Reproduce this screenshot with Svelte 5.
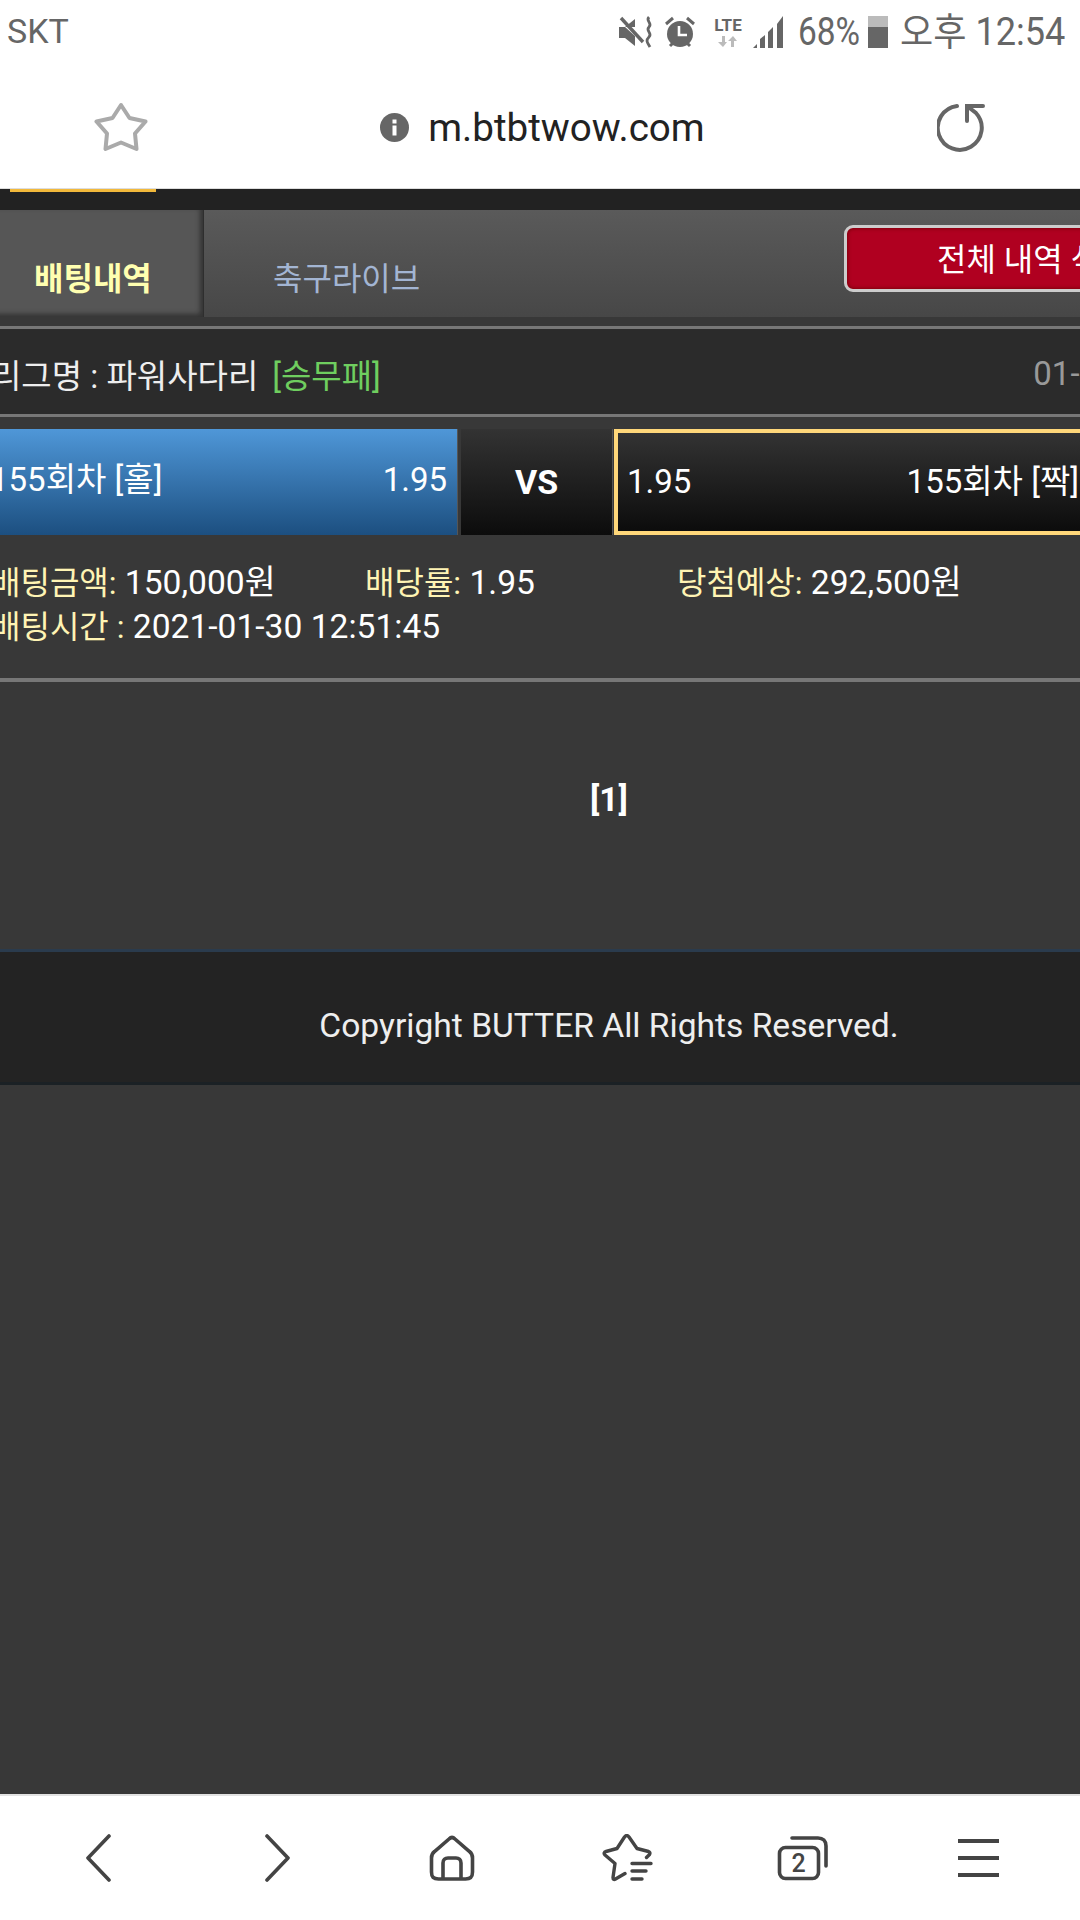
<script>
  const details = [
    { label: '배팅금액:', value: '150,000원' },
    { label: '배당률:', value: '1.95' },
    { label: '당첨예상:', value: '292,500원' }
  ];
</script>

<div class="screen">
  <!-- STATUS BAR -->
  <div class="status">
    <span class="carrier">SKT</span>
    <div class="status-right">
      <svg class="ic-mute" width="36" height="32" viewBox="0 0 36 32">
        <path d="M0 11h6l10-8v8l-3 0zM0 11v11h6l10 8V20L6 11z" fill="#666"/>
        <path d="M2 2l22 24" stroke="#666" stroke-width="3.4" fill="none"/>
        <path d="M30 1c-4 4 4 6 0 10s4 6 0 10-1 6 1 10" stroke="#666" stroke-width="2.8" fill="none"/>
      </svg>
      <svg class="ic-alarm" width="32" height="33" viewBox="0 0 32 33">
        <circle cx="16" cy="18" r="13" fill="#666"/>
        <path d="M2 8l7-6M30 8l-7-6M6 30l3-3M26 30l-3-3" stroke="#666" stroke-width="3" fill="none"/>
        <path d="M15 10v9h8" stroke="#fff" stroke-width="2.6" fill="none"/>
      </svg>
      <div class="lte">
        <span>LTE</span>
        <svg width="20" height="11" viewBox="0 0 20 11">
          <path d="M4 0v6H0l5 5 4-5H7V0zM15 0l-5 5h3v6h3V5h3z" fill="#bbb"/>
        </svg>
      </div>
      <svg class="ic-signal" width="32" height="32" viewBox="0 0 32 32">
        <path d="M0 32l4-4v4zM7 32v-9l5-4v13zM15 32V16l5-5v21zM24 32V8l6-8v32z" fill="#666"/>
      </svg>
      <span class="pct">68%</span>
      <div class="battery"><i></i></div>
      <span class="clock">오후 12:54</span>
    </div>
  </div>

  <!-- URL BAR -->
  <div class="urlbar">
    <svg width="56" height="52" viewBox="0 0 56 52">
      <path d="M27 4l8.500 13 16 3.500-10.500 12 1.500 15.500-15.500-6.500-15.500 6.500 1.500-15.500-10.500-12 16-3.500z" fill="none" stroke="#aaa" stroke-width="4" stroke-linejoin="round"/>
    </svg>
    <div class="url">
      <svg width="29" height="29" viewBox="0 0 29 29">
        <circle cx="14.500" cy="14.500" r="14.500" fill="#666"/>
        <rect x="12.500" y="12.500" width="4" height="10" fill="#fff"/>
        <rect x="12.500" y="6.500" width="4" height="4" fill="#fff"/>
      </svg>
      <span>m.btbtwow.com</span>
    </div>
    <svg width="50" height="52" viewBox="0 0 50 52">
      <path d="M20 5A22 22 0 1 0 39 12L30 5" fill="none" stroke="#666" stroke-width="4" stroke-linecap="round"/>
      <path d="M46 5H30V20" fill="none" stroke="#666" stroke-width="4" stroke-linecap="round"/>
    </svg>
  </div>

  <!-- PAGE -->
  <div class="page">
    <div class="topstrip"><div class="marker"></div></div>

    <div class="tabs">
      <div class="tab active">배팅내역</div>
      <div class="tab">축구라이브</div>
      <button class="del-btn">전체 내역 삭제</button>
    </div>

    <div class="league">
      <span>리그명 : 파워사다리</span>
      <span class="green">[승무패]</span>
      <span class="date">01-30 12:50</span>
    </div>

    <div class="match">
      <div class="side home">
        <span>155회차 [홀]</span>
        <span>1.95</span>
      </div>
      <div class="vs">VS</div>
      <div class="side away">
        <span>1.95</span>
        <span>155회차 [짝]</span>
      </div>
    </div>

    <div class="details">
      <div class="detail-row">
        {#each details as d}
          <div><span class="label">{d.label}</span> {d.value}</div>
        {/each}
      </div>
      <div><span class="label">배팅시간 :</span> 2021-01-30 12:51:45</div>
    </div>

    <div class="pager">[1]</div>

    <div class="footer">Copyright BUTTER All Rights Reserved.</div>
  </div>

  <!-- BOTTOM NAV -->
  <div class="bottom">
    <svg width="26" height="48" viewBox="0 0 26 48">
      <path d="M24 2L3 24l21 22" fill="none" stroke="#444" stroke-width="3.600" stroke-linecap="round" stroke-linejoin="round"/>
    </svg>
    <svg class="fwd" width="26" height="48" viewBox="0 0 26 48">
      <path d="M2 2l21 22L2 46" fill="none" stroke="#444" stroke-width="3.600" stroke-linecap="round" stroke-linejoin="round"/>
    </svg>
    <svg class="home-ic" width="46" height="48" viewBox="0 0 46 48">
      <path d="M2.500 24c0-3 1-5 3-6.500L20 5c2-2 4-2 6 0l14.500 12.500c2 1.500 3 3.500 3 6.500v14c0 5-2 7-7 7H9.500c-5 0-7-2-7-7z" fill="none" stroke="#444" stroke-width="3.600"/>
      <path d="M14 45V29c0-3 2-5 5-5h8c3 0 5 2 5 5v16" fill="none" stroke="#444" stroke-width="3.600"/>
    </svg>
    <svg class="fav-ic" width="52" height="48" viewBox="0 0 52 48">
      <path d="M44.500 23.500l3-3c1-1.500 0-2.500-1-3L35 14.500 27 3c-1.500-2-3-2-4.500 0L15 14.500 4 17.500c-2 .5-2.500 2-1 3.500L13 29.500l-2 14c0 2 1 2.500 2.500 1.500L23 39.500" fill="none" stroke="#444" stroke-width="3.400" stroke-linecap="round" stroke-linejoin="round"/>
      <path d="M30 29.500h19M30 37h14M30 45h10" stroke="#444" stroke-width="3.400" stroke-linecap="round" fill="none"/>
    </svg>
    <svg class="tabs-ic" width="52" height="46" viewBox="0 0 52 46">
      <rect x="2.500" y="12.500" width="39" height="31" rx="6" fill="none" stroke="#444" stroke-width="3.600"/>
      <path d="M15 3h26c5 0 8 3 8 8v20" fill="none" stroke="#444" stroke-width="3.600" stroke-linecap="round"/>
      <text x="21.500" y="36.500" text-anchor="middle" class="tabnum">2</text>
    </svg>
    <div class="menu"><i></i><i></i><i></i></div>
  </div>
</div>

<style>
  :global(body) {
    margin: 0;
    background: #383838;
  }

  .screen {
    width: 1080px;
    height: 1920px;
    overflow: hidden;
    display: flex;
    flex-direction: column;
    font-family: Roboto, "Noto Sans CJK KR", sans-serif;
  }

  /* STATUS BAR */
  .status {
    height: 60px;
    flex: none;
    background: #fff;
    color: #666;
    display: flex;
    align-items: center;
    justify-content: space-between;
    padding: 4px 15px 0 7px;
    box-sizing: border-box;
  }

  .carrier {
    font-size: 34px;
    line-height: 40px;
    margin-top: -3px;
  }

  .status-right {
    display: flex;
    align-items: center;
  }

  .ic-mute { margin-right: 9px; }
  .ic-alarm { margin-right: 15px; }

  .lte {
    width: 34px;
    margin-right: 8px;
    display: flex;
    flex-direction: column;
    align-items: center;
    font-size: 17px;
    font-weight: 700;
    line-height: 17px;
    gap: 2px;
  }

  .ic-signal { margin-right: 13px; }

  .pct, .clock {
    font-size: 38px;
    line-height: 40px;
    display: inline-block;
    transform-origin: left center;
    white-space: nowrap;
  }

  .pct {
    width: 70px;
    transform: scaleX(0.88);
  }

  .clock {
    width: 165px;
    margin-left: 12px;
    transform: scaleX(0.95);
  }

  .battery {
    width: 20px;
    height: 32px;
    background: #bbb;
    position: relative;
  }

  .battery i {
    position: absolute;
    left: 0;
    right: 0;
    bottom: 0;
    height: 21px;
    background: #666;
  }

  /* URL BAR */
  .urlbar {
    height: 129px;
    flex: none;
    box-sizing: border-box;
    background: #fff;
    border-bottom: 1px solid #ddd;
    display: flex;
    align-items: center;
    padding: 6px 93px 0 94px;
    justify-content: space-between;
  }

  .url {
    display: flex;
    align-items: center;
    gap: 19px;
    margin-left: -2px;
    color: #222;
    font-size: 38.6px;
  }

  /* PAGE */
  .page {
    flex: 1;
    width: 1258px;
    margin-left: -20px;
    background: #383838;
    color: #fff;
    font-size: 33.6px;
    white-space: nowrap;
  }

  .topstrip {
    height: 21px;
    background: #222;
    padding-left: 30px;
  }

  .marker {
    width: 146px;
    height: 3px;
    background: #f2b93b;
  }

  .tabs {
    height: 107px;
    display: flex;
    position: relative;
    background: linear-gradient(#5a5a5a, #474747);
  }

  .tab {
    box-sizing: border-box;
    padding-top: 47px;
    font-size: 32px;
    line-height: 44px;
    color: #a3b5d3;
    padding-left: 69px;
  }

  .tab.active {
    width: 224px;
    padding-left: 54px;
    color: #ffffb0;
    font-weight: 700;
    background: #565656;
    box-shadow: inset -3px -3px 5px #333;
    border-right: 1px solid #2e2e2e;
  }

  .del-btn {
    position: absolute;
    left: 864px;
    top: 15px;
    width: 300px;
    height: 67px;
    box-sizing: border-box;
    border: 3px solid #ccc;
    border-radius: 9px;
    background: #b00020;
    box-shadow: inset 0 0 4px #600;
    color: #fff;
    font: inherit;
    font-size: 32px;
    padding: 0 0 4px 90px;
    text-align: left;
    white-space: nowrap;
  }

  .league {
    margin-top: 9px;
    height: 91px;
    box-sizing: border-box;
    background: #2b2b2b;
    border-top: 3px solid #777;
    border-bottom: 3px solid #777;
    display: flex;
    align-items: center;
    color: #eee;
    font-size: 33px;
    gap: 14px;
    padding: 4px 31px 0 11px;
  }

  .green { color: #6fce5f; }

  .date {
    color: #999;
    margin-left: auto;
  }

  .match {
    display: flex;
    height: 106px;
    margin-top: 12px;
    gap: 3px;
  }

  .side {
    display: flex;
    align-items: center;
    justify-content: space-between;
    box-sizing: border-box;
    padding-bottom: 4px;
    font-size: 33px;
  }

  .side span {
    line-height: 40px;
  }

  .home {
    width: 478px;
    padding-left: 10px;
    padding-right: 10px;
    background: linear-gradient(#4f97d8, #1c4f80);
    border-right: 1px solid #555;
  }

  .vs {
    width: 151px;
    background: linear-gradient(#333, #0c0c0c);
    display: flex;
    align-items: center;
    justify-content: center;
    font-weight: 700;
    font-size: 34px;
    border-right: 1px solid #555;
  }

  .away {
    width: 600px;
    border: 4px solid #ffd77a;
    padding: 0 131px 0 9px;
    background: linear-gradient(#333, #0c0c0c);
    margin-left: -2px;
  }

  .details {
    height: 147px;
    box-sizing: border-box;
    padding-top: 26px;
    line-height: 44px;
    border-bottom: 4px solid #777;
    padding-left: 11px;
  }

  .detail-row {
    display: grid;
    grid-template-columns: 374px 312px 1fr;
  }

  .label {
    color: #fff4b4;
    font-size: 32px;
  }

  .pager {
    height: 267px;
    box-sizing: border-box;
    padding-top: 96px;
    text-align: center;
    font-weight: 700;
    line-height: 44px;
  }

  .footer {
    height: 136px;
    box-sizing: border-box;
    background: #232323;
    border-top: 3px solid #2a3b4d;
    border-bottom: 3px solid #1b2125;
    padding-top: 16px;
    display: flex;
    align-items: center;
    justify-content: center;
    color: #eee;
  }

  /* BOTTOM NAV */
  .bottom {
    height: 126px;
    flex: none;
    box-sizing: border-box;
    background: #fff;
    border-top: 2px solid #e2e2e2;
    display: flex;
    align-items: center;
    padding: 0 0 0 85px;
  }

  .fwd { margin-left: 154px; }
  .home-ic { margin-left: 138px; }
  .fav-ic { margin-left: 127px; }
  .tabs-ic { margin-left: 123px; }

  .tabnum {
    font-size: 25px;
    font-weight: 500;
    fill: #444;
    font-family: Roboto, sans-serif;
  }

  .menu {
    width: 41px;
    margin-left: 129px;
    display: flex;
    flex-direction: column;
    gap: 13px;
  }

  .menu i {
    display: block;
    height: 4px;
    background: #444;
  }
</style>
